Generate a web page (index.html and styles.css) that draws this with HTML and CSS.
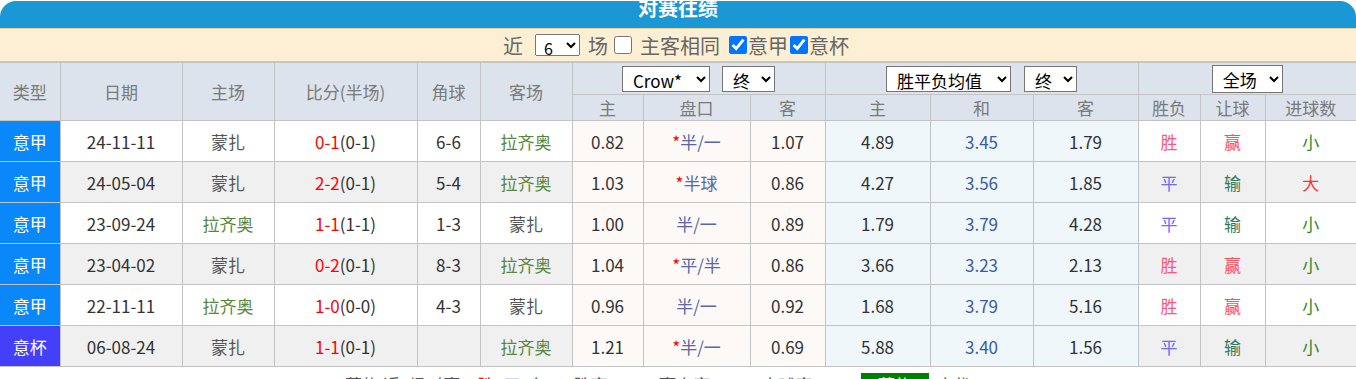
FILE: index.html
```html
<!DOCTYPE html>
<html lang="zh-CN">
<head>
<meta charset="utf-8">
<title>对赛往绩</title>
<link rel="stylesheet" href="styles.css">
</head>
<body>
<div class="panel">
  <div class="title">对赛往绩</div>
  <div class="filter">
    <span class="f-near">近</span>
    <select class="sel-n"><option>6</option></select>
    <span class="f-chang">场</span>
    <input type="checkbox" class="cb cb-same">
    <span class="f-same">主客相同</span>
    <input type="checkbox" class="cb cb-a" checked><span>意甲</span><input type="checkbox" class="cb cb-b" checked><span>意杯</span>
  </div>
  <table class="grid">
    <colgroup>
      <col class="c-type"><col class="c-date"><col class="c-home"><col class="c-score"><col class="c-corner"><col class="c-away">
      <col class="c-o1"><col class="c-o2"><col class="c-o3">
      <col class="c-e1"><col class="c-e2"><col class="c-e3">
      <col class="c-r1"><col class="c-r2"><col class="c-r3">
    </colgroup>
    <thead>
      <tr class="h1">
        <th rowspan="2" class="first">类型</th>
        <th rowspan="2">日期</th>
        <th rowspan="2">主场</th>
        <th rowspan="2">比分(半场)</th>
        <th rowspan="2">角球</th>
        <th rowspan="2">客场</th>
        <th colspan="3"><div class="sels g12"><select class="s s-crow"><option>Crow*</option></select><select class="s s-end"><option>终</option></select></div></th>
        <th colspan="3"><div class="sels g13"><select class="s s-avg"><option>胜平负均值</option></select><select class="s s-end"><option>终</option></select></div></th>
        <th colspan="3" class="last"><div class="sels"><select class="s s-full"><option>全场</option></select></div></th>
      </tr>
      <tr class="h2">
        <th>主</th><th>盘口</th><th>客</th>
        <th>主</th><th>和</th><th>客</th>
        <th>胜负</th><th>让球</th><th class="last">进球数</th>
      </tr>
    </thead>
    <tbody>
      <tr>
        <td class="first lg a">意甲</td><td>24-11-11</td><td class="tm">蒙扎</td>
        <td><span class="red">0-1</span>(0-1)</td><td>6-6</td><td class="tg">拉齐奥</td>
        <td class="od">0.82</td><td class="od pk"><span class="red">*</span>半/一</td><td class="od">1.07</td>
        <td class="eu">4.89</td><td class="eu dr">3.45</td><td class="eu">1.79</td>
        <td class="win">胜</td><td class="ying">赢</td><td class="last xiao">小</td>
      </tr>
      <tr class="alt">
        <td class="first lg a">意甲</td><td>24-05-04</td><td class="tm">蒙扎</td>
        <td><span class="red">2-2</span>(0-1)</td><td>5-4</td><td class="tg">拉齐奥</td>
        <td class="od">1.03</td><td class="od pk"><span class="red">*</span>半球</td><td class="od">0.86</td>
        <td class="eu">4.27</td><td class="eu dr">3.56</td><td class="eu">1.85</td>
        <td class="draw">平</td><td class="shu">输</td><td class="last da">大</td>
      </tr>
      <tr>
        <td class="first lg a">意甲</td><td>23-09-24</td><td class="tg">拉齐奥</td>
        <td><span class="red">1-1</span>(1-1)</td><td>1-3</td><td class="tm">蒙扎</td>
        <td class="od">1.00</td><td class="od pk">半/一</td><td class="od">0.89</td>
        <td class="eu">1.79</td><td class="eu dr">3.79</td><td class="eu">4.28</td>
        <td class="draw">平</td><td class="shu">输</td><td class="last xiao">小</td>
      </tr>
      <tr class="alt">
        <td class="first lg a">意甲</td><td>23-04-02</td><td class="tm">蒙扎</td>
        <td><span class="red">0-2</span>(0-1)</td><td>8-3</td><td class="tg">拉齐奥</td>
        <td class="od">1.04</td><td class="od pk"><span class="red">*</span>平/半</td><td class="od">0.86</td>
        <td class="eu">3.66</td><td class="eu dr">3.23</td><td class="eu">2.13</td>
        <td class="win">胜</td><td class="ying">赢</td><td class="last xiao">小</td>
      </tr>
      <tr>
        <td class="first lg a">意甲</td><td>22-11-11</td><td class="tg">拉齐奥</td>
        <td><span class="red">1-0</span>(0-0)</td><td>4-3</td><td class="tm">蒙扎</td>
        <td class="od">0.96</td><td class="od pk">半/一</td><td class="od">0.92</td>
        <td class="eu">1.68</td><td class="eu dr">3.79</td><td class="eu">5.16</td>
        <td class="win">胜</td><td class="ying">赢</td><td class="last xiao">小</td>
      </tr>
      <tr class="alt">
        <td class="first lg b">意杯</td><td>06-08-24</td><td class="tm">蒙扎</td>
        <td><span class="red">1-1</span>(0-1)</td><td></td><td class="tg">拉齐奥</td>
        <td class="od">1.21</td><td class="od pk"><span class="red">*</span>半/一</td><td class="od">0.69</td>
        <td class="eu">5.88</td><td class="eu dr">3.40</td><td class="eu">1.56</td>
        <td class="draw">平</td><td class="shu">输</td><td class="last xiao">小</td>
      </tr>
    </tbody>
  </table>
  <div class="summary">
    <span class="txt">蒙扎 近6场对赛，</span><span class="txt red">胜3</span><span class="txt blue">平2</span><span class="txt grn">负1</span><span class="txt">，胜率</span><span class="txt red">50%</span><span class="txt">，赢盘率</span><span class="txt red">50%</span><span class="txt">，大球率</span><span class="txt blue">17%</span>
    <span class="badge">蒙扎</span><span class="txt tail">占优</span>
  </div>
</div>
</body>
</html>
```

FILE: styles.css
```css
* { box-sizing: border-box; }

body {
  margin: 0;
  background: #ffffff;
  font-family: "Noto Sans CJK SC", "Noto Sans", "Liberation Sans", sans-serif;
  color: #333333;
}

.panel {
  width: 1356px;
}

.title {
  height: 27px;
  margin-top: 1px;
  background: #1b97d5;
  border-radius: 16px 16px 0 0;
  color: #ffffff;
  font-size: 20px;
  font-weight: bold;
  text-align: center;
  line-height: 13px;
}

.filter {
  height: 34px;
  background: #fdefd3;
  border-top: 1px solid #e8cf9c;
  border-bottom: 1px solid #d9c59e;
  display: flex;
  justify-content: center;
  align-items: center;
  font-size: 20px;
  color: #666666;
  padding-right: 4px;
}

.sel-n {
  width: 45px;
  height: 22px;
  margin: 0 8px 0 12px;
  font-size: 16px;
  font-family: "Noto Sans CJK SC", "Liberation Sans", sans-serif;
  padding: 0 0 0 4px;
  color: #000;
}

.cb {
  width: 18px;
  height: 18px;
  margin: 0;
}
.cb-same { margin: 0 8px 0 6px; }
.cb-a { margin: 0 1px 0 9px; }
.cb-b { margin: 0 1px 0 2px; }

.grid {
  width: 1356px;
  border-collapse: collapse;
  table-layout: fixed;
  font-size: 17px;
}

.c-type { width: 60px; }
.c-date { width: 122px; }
.c-home { width: 92px; }
.c-score { width: 143px; }
.c-corner { width: 63px; }
.c-away { width: 92px; }
.c-o1 { width: 71px; }
.c-o2 { width: 107px; }
.c-o3 { width: 75px; }
.c-e1 { width: 105px; }
.c-e2 { width: 103px; }
.c-e3 { width: 105px; }
.c-r1 { width: 62px; }
.c-r2 { width: 65px; }
.c-r3 { width: 91px; }

.grid th,
.grid td {
  border: 1px solid #c3c3c3;
  text-align: center;
  padding: 0;
  font-weight: normal;
  white-space: nowrap;
}

.grid .first { border-left: none; }
.grid .last { border-right: none; }

.grid thead th {
  background: #dce3ec;
  color: #7a7a7a;
}

.grid .h1 { height: 32px; }
.grid .h2 { height: 26px; }
.grid tbody tr { height: 41px; }

.sels {
  display: flex;
  justify-content: center;
  align-items: center;
  gap: 12px;
}
.sels.g13 { gap: 13px; }

.s {
  height: 26px;
  font-size: 17px;
  font-family: "Noto Sans CJK SC", "Liberation Sans", sans-serif;
  color: #000;
  background: #fff;
  padding: 0 0 0 6px;
}
.s-crow { width: 88px; }
.s-end { width: 53px; }
.s-avg { width: 125px; }
.s-full { width: 71px; height: 28px; }

.grid tbody tr { background: #ffffff; }
.grid tbody tr.alt { background: #f0f0f0; }

.lg { color: #ffffff; }
.lg.a { background: #0a88fa; }
.lg.b { background: #4440fa; }

.tm { color: #555555; }
.tg { color: #58863a; }
.red { color: #ff0000; }

.od { background: #fdf9f6; }
.pk { color: #5a66a8; }
.eu { background: #eff7fb; }
.dr { color: #3a5aa8; }

.win { color: #ff5577; }
.draw { color: #6b6bff; }
.ying { color: #ff4d5e; }
.shu { color: #2f7a5f; }
.xiao { color: #2d8a2d; }
.da { color: #ff3030; }

.summary {
  display: flex;
  justify-content: center;
  align-items: flex-start;
  padding-top: 6px;
  font-size: 17px;
  line-height: 24px;
  color: #555555;
}
.summary .txt { padding-top: 0; }
.summary .tail { margin-right: 40px; }
.summary .blue { color: #3a5aa8; }
.summary .grn { color: #2d8a2d; }
.summary .badge {
  background: #008000;
  color: #ffffff;
  width: 68px;
  height: 24px;
  text-align: center;
  margin: 0 8px 0 14px;
}
```
